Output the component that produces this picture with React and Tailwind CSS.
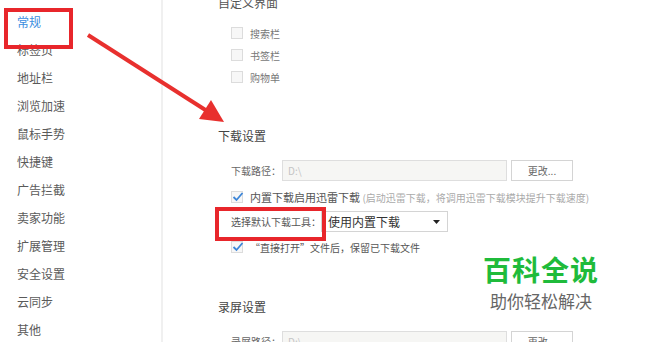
import React from "react";

const font = { fontFamily: '"Noto Sans CJK SC", "Noto Sans", sans-serif' };

const side = ["常规", "标签页", "地址栏", "浏览加速", "鼠标手势", "快捷键", "广告拦截", "卖家功能", "扩展管理", "安全设置", "云同步", "其他"];

function Box({ checked }) {
  return (
    <span className="relative inline-block w-[12px] h-[12px] border border-[#dcdcdc] bg-[#f7f7f7] shrink-0">
      {checked && (
        <svg className="absolute left-[-1px] top-[-2px]" width="14" height="13" viewBox="0 0 14 13">
          <path d="M2.5 7 L5.5 10 L11.5 3" fill="none" stroke="#3d86d8" strokeWidth="1.8" />
        </svg>
      )}
    </span>
  );
}

function PathRow({ label, mt }) {
  return (
    <div className={`flex items-center h-[21px] ml-[13px] ${mt}`}>
      <span className="w-[51px] text-[10px] text-[#666] whitespace-nowrap">{label}</span>
      <div className="w-[225px] h-[21px] border border-[#dedede] bg-[#f6f6f4] flex items-center pl-[5px] text-[10px] text-[#c4c4c4]">D:\</div>
      <div className="ml-[4px] w-[62px] h-[21px] border border-[#d4d4d4] bg-white flex items-center justify-center text-[10px] text-[#666]">更改...</div>
    </div>
  );
}

export default function App() {
  return (
    <div className="relative w-[650px] h-[342px] overflow-hidden bg-white flex" style={font}>
      <div className="w-[163px] h-full border-r-[2px] border-[#f0f0f0] pt-[8px] shrink-0">
        {side.map((s, i) => (
          <div key={s} className={`h-[28px] flex items-center pl-[17px] text-[12px] ${i === 0 ? "text-[#3b8ee0]" : "text-[#5a5a5a]"}`}>{s}</div>
        ))}
      </div>
      <div className="flex-1 pl-[55px] block">
        <div className="mt-[-5px] h-[16px] flex items-center text-[12px] text-[#555]">自定义界面</div>
        {["搜索栏", "书签栏", "购物单"].map((s, i) => (
          <div key={s} className={`h-[22px] flex items-center ml-[13px] gap-[7px] ${i === 0 ? "mt-[11px]" : ""}`}>
            <Box />
            <span className="text-[10px] text-[#777]">{s}</span>
          </div>
        ))}
        <div className="mt-[40px] h-[16px] flex items-center text-[12px] text-[#444]">下载设置</div>
        <PathRow label="下载路径：" mt="mt-[16px]" />
        <div className="mt-[8px] h-[16px] flex items-center ml-[13px] gap-[7px]">
          <Box checked />
          <span className="text-[11px] text-[#555] whitespace-nowrap">内置下载启用迅雷下载 <span className="text-[10px] text-[#aaa]">(启动迅雷下载，将调用迅雷下载模块提升下载速度)</span></span>
        </div>
        <div className="mt-[6px] h-[21px] flex items-center ml-[13px]">
          <span className="w-[90px] text-[10px] text-[#555] whitespace-nowrap">选择默认下载工具：</span>
          <div className="w-[127px] h-[21px] border border-[#d4d4d4] bg-white flex items-center justify-between pl-[6px] pr-[7px] text-[12px] text-[#333]">
            <span>使用内置下载</span>
            <svg width="7" height="4" viewBox="0 0 7 4"><polygon points="0,0 7,0 3.5,4" fill="#222" /></svg>
          </div>
        </div>
        <div className="mt-[7px] h-[16px] flex items-center ml-[13px] gap-[7px]">
          <Box checked />
          <span className="text-[10px] text-[#555] whitespace-nowrap">“直接打开”文件后，保留已下载文件</span>
        </div>
        <div className="mt-[44px] h-[16px] flex items-center text-[12px] text-[#444]">录屏设置</div>
        <PathRow label="录屏路径：" mt="mt-[16px]" />
      </div>

      {/* annotations */}
      <div className="absolute left-[4px] top-[8px] w-[69px] h-[41px] border-[4px] border-[#e8262b]" />
      <div className="absolute left-[215px] top-[207px] w-[111px] h-[34px] border-[4px] border-[#e8262b]" />
      <svg className="absolute left-0 top-0" width="650" height="342">
        <line x1="88" y1="35" x2="207" y2="111" stroke="#e8302e" strokeWidth="4" />
        <polygon points="224,122 199,119 211,100" fill="#e8302e" />
      </svg>
      <div className="absolute left-[465px] top-[250px] w-[152px] h-[68px] bg-white/90 flex flex-col items-center">
        <div className="mt-[2px] text-[28px] leading-[34px] font-bold text-[#1fbb3b] tracking-[1px]">百科全说</div>
        <div className="mt-[5px] text-[17px] leading-[20px] text-[#666]">助你轻松解决</div>
      </div>
    </div>
  );
}
